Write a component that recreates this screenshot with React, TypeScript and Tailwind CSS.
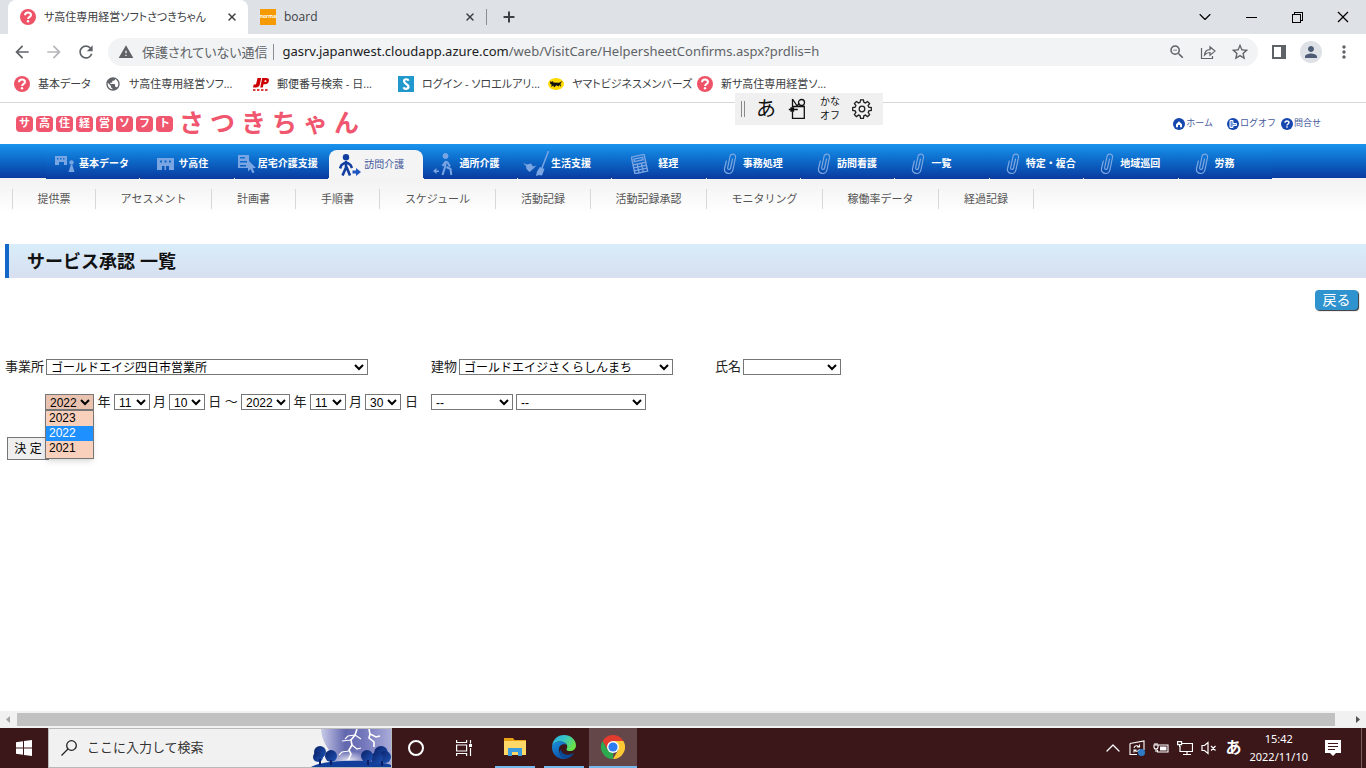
import { ReactNode } from 'react';
import {
  MdArrowBack,
  MdArrowForward,
  MdMoreVert,
  MdOutlineZoomOut,
  MdPerson,
  MdPublic,
  MdRefresh,
  MdStarBorder,
  MdWarning,
} from 'react-icons/md';
import { VscChromeClose, VscChromeMinimize, VscChromeRestore } from 'react-icons/vsc';
import { ChevronDown, ChevronUp, Plus, X } from 'lucide-react';

const QuestionIcon = () => (
  <svg viewBox="0 0 16 16" className="size-4 shrink-0">
    <circle cx="8" cy="8" r="8" fill="#ee5368" />
    <path
      d="M5 6.3C5 4.4 6.3 3.5 8 3.5s3 .9 3 2.5c0 1.9-2.9 1.9-2.9 4"
      fill="none"
      stroke="#fff"
      strokeWidth="2"
    />
    <circle cx="8" cy="12.3" r="1.2" fill="#fff" />
  </svg>
);

const JpIcon = () => (
  <svg viewBox="0 0 16 16" className="size-4 shrink-0">
    <path
      d="M4.500 2h3.700L6.800 8.500C6.300 10.600 5 11.500 3 11.500H0l.7-3h1.500c.6 0 .9-.2 1-.8z"
      fill="#c00"
    />
    <path
      d="M9.200 2h4c2.200 0 3.100 1.200 2.700 3-.5 2.200-1.900 3.200-4 3.200h-1.400l-.7 3.300H7.200zm2.600 2.200-.4 1.800h.9c1.200 0 1.600-1.800.4-1.800z"
      fill="#c00"
      fillRule="evenodd"
    />
    <path d="M0 14h15" stroke="#c00" strokeWidth="1.300" strokeDasharray="2.500 1.500" />
  </svg>
);

const SIcon = () => (
  <svg viewBox="0 0 16 16" className="size-4 shrink-0">
    <rect width="16" height="16" fill="#2299cc" />
    <path
      d="M10.500 4.800C10 2.800 6 2.500 6 5.300c0 2.500 4.500 2.800 4.500 5.300 0 3-4.300 2.800-5 .8"
      fill="none"
      stroke="#fff"
      strokeWidth="2.200"
    />
  </svg>
);

const CatIcon = () => (
  <svg viewBox="0 0 16 16" className="size-4 shrink-0">
    <ellipse cx="8" cy="8" rx="8" ry="6" fill="#ffd900" />
    <path
      d="M2 5 3.500 6l1.500-1 .3 1.500 5.700.2 3.500-1.700-2 2.500.5 3.500-1.500-2-1 1.500-2-1.300L6 11.500l-.5-2L3 11l.8-2.300L2.300 8z"
      fill="#111"
    />
  </svg>
);

interface BookmarkProps {
  icon: ReactNode;
  label: string;
  width: string;
}

const bookmarks: BookmarkProps[] = [
  { icon: <QuestionIcon />, label: '基本データ', width: 'w-[91px]' },
  {
    icon: <MdPublic className="size-4 shrink-0 text-[#5f6368]" />,
    label: 'サ高住専用経営ソフ...',
    width: 'w-[148px]',
  },
  { icon: <JpIcon />, label: '郵便番号検索 - 日...', width: 'w-[145px]' },
  { icon: <SIcon />, label: 'ログイン - ソロエルアリ...', width: 'w-[150px]' },
  { icon: <CatIcon />, label: 'ヤマトビジネスメンバーズ', width: 'w-[149px]' },
  { icon: <QuestionIcon />, label: '新サ高住専用経営ソ...', width: 'w-[149px]' },
];

const TabStrip = () => (
  <div className="flex h-[34px] items-center bg-[#dee1e6] pl-2 text-[#3c4043]">
    <div className="flex h-full w-[240px] items-center rounded-t-lg bg-white pl-3">
      <QuestionIcon />
      <span className="ml-2 flex-1 whitespace-nowrap text-[11px]">
        サ高住専用経営ソフトさつきちゃん
      </span>
      <button aria-label="閉じる" className="mr-2">
        <X className="size-4 p-0.5" strokeWidth={3} />
      </button>
    </div>
    <div className="flex w-[239px] items-center border-r border-[#8a8d91] pl-3">
      <span className="flex size-4 items-center justify-center bg-[#f59a00] text-[5px] font-bold text-white">
        norma
      </span>
      <span className="ml-2 flex-1 text-xs">board</span>
      <button aria-label="閉じる" className="mr-2">
        <X className="size-4 p-0.5" strokeWidth={3} />
      </button>
    </div>
    <button aria-label="新しいタブ" className="ml-3">
      <Plus className="size-5 p-0.5" strokeWidth={3} />
    </button>
    <div className="ml-auto flex h-7 text-black">
      <button aria-label="タブを検索" className="flex w-[46px] items-center justify-center">
        <ChevronDown className="size-5" strokeWidth={1.3} />
      </button>
      <button aria-label="最小化" className="flex w-[46px] items-center justify-center">
        <VscChromeMinimize className="size-4" />
      </button>
      <button aria-label="元に戻す" className="flex w-[46px] items-center justify-center">
        <VscChromeRestore className="size-4" />
      </button>
      <button aria-label="ウィンドウを閉じる" className="flex w-[46px] items-center justify-center">
        <VscChromeClose className="size-4" />
      </button>
    </div>
  </div>
);

const AddressBar = () => (
  <div className="flex h-9 items-center pl-3 pr-3 text-[#5f6368]">
    <button aria-label="戻る" className="mr-3">
      <MdArrowBack className="size-5" />
    </button>
    <button aria-label="進む" className="mr-3 text-[#b4b6b9]">
      <MdArrowForward className="size-5" />
    </button>
    <button aria-label="再読み込み" className="mr-3">
      <MdRefresh className="size-5" />
    </button>
    <div className="flex h-7 flex-1 items-center rounded-full bg-[#f1f3f4] pl-2.5 pr-2">
      <MdWarning className="size-4" />
      <span className="ml-2 border-r border-[#8a8d91] pr-1.5 text-[13px] leading-4">
        保護されていない通信
      </span>
      <span className="ml-2 flex-1 font-['Noto_Sans'] text-[13px]">
        <span className="text-[#202124]">gasrv.japanwest.cloudapp.azure.com</span>
        /web/VisitCare/HelpersheetConfirms.aspx?prdlis=h
      </span>
      <button aria-label="ズーム" className="mr-3.5">
        <MdOutlineZoomOut className="size-[18px]" />
      </button>
      <button aria-label="共有" className="mr-3.5">
        <svg viewBox="0 0 16 16" className="size-4" fill="none" stroke="#5f6368" strokeWidth="1.2">
          <path d="M1.500 4v10.500h11V12" />
          <path d="M4.500 11c.3-3.500 2-5.300 5.500-5.400V2.800l5 4.300-5 4.200V8.500c-2.500 0-4 .7-5.500 2.500z" />
        </svg>
      </button>
      <button aria-label="ブックマーク">
        <MdStarBorder className="size-5" />
      </button>
    </div>
    <button aria-label="サイドパネル" className="ml-3.5">
      <svg viewBox="0 0 14 14" className="size-3.5">
        <path d="M0 0h14v14H0zM2 2v10h7V2z" fill="#5f6368" fillRule="evenodd" />
      </svg>
    </button>
    <button
      aria-label="プロフィール"
      className="ml-3.5 flex size-[22px] items-center justify-center rounded-full bg-[#dee1e6] text-[#4d5b75]"
    >
      <MdPerson className="size-[18px]" />
    </button>
    <button aria-label="メニュー" className="ml-3">
      <MdMoreVert className="size-5" />
    </button>
  </div>
);

const Bookmarks = () => (
  <div className="flex h-[33px] items-center border-b border-[#d5d7da] pb-1 pl-3.5 text-[#3c4043]">
    {bookmarks.map(({ icon, label, width }) => (
      <a
        key={label}
        href="#"
        className={`flex shrink-0 items-center gap-2 whitespace-nowrap text-[11px] ${width}`}
      >
        {icon}
        {label}
      </a>
    ))}
  </div>
);

const ImeBar = () => (
  <div className="absolute left-[735px] top-[93px] flex h-8 w-[148px] items-center bg-[#f0f0f0] text-[#111]">
    <span className="ml-1.5 h-4 w-1 border-x border-[#8a8a8a]" />
    <span className="ml-[11px] w-5 text-xl leading-none">あ</span>
    <svg viewBox="0 0 18 22" className="ml-3 h-[22px] w-[18px]" fill="none" stroke="#111" strokeWidth="1.300">
      <path d="M4.500 13.500v6.800h11.800V8.500H4.500v1" />
      <path d="M.8 11.500h9M3 10h2.500v3H3z" />
      <path d="M4.500 1v7M4.500 1l5 7.500M8 8.500l3.500-3" />
      <circle cx="13.500" cy="4.500" r="3" />
    </svg>
    <span className="ml-3.5 w-5 text-center text-[10px] leading-[14px]">
      かな
      <br />
      オフ
    </span>
    <svg viewBox="0 0 20 20" className="ml-3 size-5" fill="none" stroke="#222" strokeWidth="1.300">
      <path d="M8.600.8h2.800l.5 2.500 1.500.6 2.200-1.400 2 2-1.500 2.100.7 1.600 2.500.4v2.800l-2.500.5-.6 1.500 1.400 2.200-2 2-2.200-1.500-1.500.7-.5 2.500H8.600l-.5-2.500-1.500-.7-2.200 1.500-2-2 1.500-2.200-.7-1.500-2.500-.5V8.600l2.500-.4.7-1.600-1.500-2.100 2-2 2.200 1.400 1.500-.6z" />
      <circle cx="10" cy="10" r="2.800" />
    </svg>
  </div>
);

const logoTiles = ['サ', '高', '住', '経', '営', 'ソ', 'フ', 'ト'];
const logoName = ['さ', 'つ', 'き', 'ち', 'ゃ', 'ん'];

const headerLinks = [
  {
    label: 'ホーム',
    margin: 'mr-3.5',
    icon: <path d="M3 6.300 6 3.300l3 3v2.900H7V7H5v2.200H3z" fill="#fff" />,
  },
  {
    label: 'ログオフ',
    margin: 'mr-[5px]',
    icon: <path d="M3 2.500v7h3v-2h3.500v-2H6v-3z" fill="#6f93da" stroke="#fff" strokeWidth="1" />,
  },
  {
    label: '問合せ',
    margin: 'mr-[45px]',
    icon: (
      <path
        d="M4 4.800C4 2.400 8 2.400 8 4.600 8 6 6 6 6 7.500M6 8.300v1.500"
        fill="none"
        stroke="#fff"
        strokeWidth="1.400"
      />
    ),
  },
];

const SiteHeader = () => (
  <header className="flex h-[41px] items-center justify-between pl-4">
    <h1 className="flex items-center font-bold text-[#f0566e]">
      <span className="flex gap-[3px]">
        {logoTiles.map((char) => (
          <span
            key={char}
            className="flex h-4 w-[17px] items-center justify-center rounded-sm bg-[#f0566e] text-[11px] text-white"
          >
            {char}
          </span>
        ))}
      </span>
      <span className="ml-1.5 flex gap-1.5 text-[25px] leading-none">
        {logoName.map((char) => (
          <span key={char}>{char}</span>
        ))}
      </span>
    </h1>
    <nav className="flex text-[9px] text-[#46599b]">
      {headerLinks.map(({ label, margin, icon }) => (
        <a key={label} href="#" className={`flex items-center gap-px ${margin}`}>
          <svg viewBox="0 0 12 12" className="size-3">
            <circle cx="6" cy="6" r="6" fill="#1547ae" />
            {icon}
          </svg>
          {label}
        </a>
      ))}
    </nav>
  </header>
);

const ClipIcon = () => (
  <svg
    viewBox="0 0 14 24"
    className="h-6 w-3.5"
    fill="none"
    stroke="#7ea8e2"
    strokeWidth="1.200"
    strokeLinecap="round"
  >
    <path d="M9.500 7 7.500 16c-.6 2.300-3.200 1.800-2.800-.5L7 4.500C7.800.8 13.200 1.500 12.500 5.500L10 17.500c-1.200 6-9.500 4.800-8.500-1L3.300 9" />
  </svg>
);

const navItems = [
  {
    label: '基本データ',
    pad: 'pl-[9px]',
    iconWidth: 'w-6',
    icon: (
      <svg viewBox="0 0 20 18" className="h-[18px] w-5" fill="#7aa5e3">
        <path
          d="M0 1h12v9H9V7H4v3H0zM2 3v1.500h1.500V3zM5 3v1.500h1.500V3zM8 3v1.500h1.500V3z"
          fillRule="evenodd"
        />
        <circle cx="16.500" cy="7.500" r="2.200" />
        <path d="M15.800 10h1.500l2.200 7h-6z" />
      </svg>
    ),
  },
  {
    label: 'サ高住',
    pad: 'pl-[17px]',
    iconWidth: 'w-[21px]',
    icon: (
      <svg viewBox="0 0 17 12" className="h-3 w-[17px]" fill="#7aa5e3">
        <path
          d="M0 0h17v12h-5V8H9v4H7.500V8H5v4H0zM3 2.500v2h2v-2zM7.500 2.500v2h2v-2zM12 2.500v2h2v-2z"
          fillRule="evenodd"
        />
      </svg>
    ),
  },
  {
    label: '居宅介護支援',
    pad: 'pl-[3px]',
    iconWidth: 'w-5',
    icon: (
      <svg viewBox="0 0 19 20" className="h-5 w-[19px]" fill="#7aa5e3">
        <path
          d="M0 1h11v13H0zM2 3v1.500h5V3zM2 7v1.500h7V7zM2 11v1.500h6V11z"
          fillRule="evenodd"
        />
        <path d="m10 6 8 8-3.500.2 2 4-2 1-2-4.200-2.500 2.500z" />
      </svg>
    ),
  },
  {
    label: '訪問介護',
    active: true,
    pad: 'pl-2.5',
    iconWidth: 'w-[25px]',
    icon: (
      <svg viewBox="0 0 22 22" className="h-[22px] w-[22px]">
        <circle cx="7" cy="3.200" r="3.200" fill="#123f9f" />
        <path
          d="M7 7v6.500L3.500 21.500M7.500 13l3.500 8.500M7 8 2.500 11 1 14.500M7.500 8l4 3 1.500 3"
          fill="none"
          stroke="#123f9f"
          strokeWidth="2.600"
        />
        <path d="M13.500 16.500H17V14l5 4-5 4v-2.500h-3.500z" fill="#1f55c0" />
      </svg>
    ),
  },
  {
    label: '通所介護',
    pad: 'pl-2',
    iconWidth: 'w-7',
    icon: (
      <svg viewBox="0 0 22 22" className="h-[22px] w-[22px]" fill="#7aa5e3" stroke="#7aa5e3">
        <circle cx="13.500" cy="3" r="2.500" />
        <path
          d="M14 8l-3.500 5M14 8l-1 6-2.500 8M14.500 14l4 2 .8 6M15 8.500l3 5"
          fill="none"
          strokeWidth="2"
        />
        <path d="M7 17.500H4.500V15L1 18l3.500 3v-2H7z" stroke="none" />
      </svg>
    ),
  },
  {
    label: '生活支援',
    pad: 'pl-1',
    iconWidth: 'w-[29px]',
    icon: (
      <svg viewBox="0 0 28 26" className="h-[26px] w-7" fill="#7aa5e3">
        <path d="M26.500 0 20 17" fill="none" stroke="#7aa5e3" strokeWidth="1.500" />
        <path d="m18 16 4.500 2-2.500 6.500-3-.5-3 1 1-4.500zM1 12l4 1.500 4-1 2 3 3.500-1-3 3-4 3.500-3-3-.5-3z" />
      </svg>
    ),
  },
  {
    label: '経理',
    pad: 'pl-[19px]',
    iconWidth: 'w-[27px]',
    icon: (
      <svg viewBox="0 0 18 20" className="h-5 w-[18px]" fill="none" stroke="#7aa5e3" strokeWidth="1.400">
        <g transform="rotate(-12 9 10)">
          <path d="M2 1.500h13v17H2zM4 4h9v2.500H4zM2 9.500h13M2 12.500h13M2 15.500h13M6.300 9v9M10.600 9v9" />
        </g>
      </svg>
    ),
  },
  { label: '事務処理', pad: 'pl-4', iconWidth: 'w-5', icon: <ClipIcon /> },
  { label: '訪問看護', pad: 'pl-4', iconWidth: 'w-5', icon: <ClipIcon /> },
  { label: '一覧', pad: 'pl-4', iconWidth: 'w-5', icon: <ClipIcon /> },
  { label: '特定・複合', pad: 'pl-4', iconWidth: 'w-5', icon: <ClipIcon /> },
  { label: '地域巡回', pad: 'pl-4', iconWidth: 'w-5', icon: <ClipIcon /> },
  { label: '労務', pad: 'pl-4', iconWidth: 'w-5', icon: <ClipIcon /> },
];

const subItems = [
  { label: '提供票', width: 'w-[84px]' },
  { label: 'アセスメント', width: 'w-[116px]' },
  { label: '計画書', width: 'w-[84px]' },
  { label: '手順書', width: 'w-[84px]' },
  { label: 'スケジュール', width: 'w-[116px]' },
  { label: '活動記録', width: 'w-[95px]' },
  { label: '活動記録承認', width: 'w-[116px]' },
  { label: 'モニタリング', width: 'w-[116px]' },
  { label: '稼働率データ', width: 'w-[116px]' },
  { label: '経過記録', width: 'w-[95px]' },
];

const MainNav = () => (
  <nav className="relative h-[34px] bg-linear-to-b from-[#1a94ee] to-[#0b3aa0] pl-[46px]">
    <div className="grid h-[35px] w-[1226px] grid-cols-[repeat(13,minmax(0,1fr))] gap-px">
      {navItems.map(({ label, pad, iconWidth, icon, active }) => (
        <a
          key={label}
          href="#"
          className={`flex items-center whitespace-nowrap text-[10px] ${pad} ${
            active
              ? 'mt-1.5 rounded-t-lg bg-[#f4f4f4] text-[#46599b]'
              : 'bg-linear-to-b from-[#1a94ee] to-[#0b3aa0] pt-1 font-bold text-white'
          }`}
        >
          <span className={`shrink-0 ${iconWidth}`}>{icon}</span>
          {label}
        </a>
      ))}
    </div>
  </nav>
);

const SubNav = () => (
  <nav className="flex h-[35px] bg-linear-to-b from-[#f2f2f2] to-white pl-3 pt-[11px] text-[11px] text-[#555]">
    {subItems.map(({ label, width }) => (
      <a
        key={label}
        href="#"
        className={`flex h-5 shrink-0 items-center justify-center whitespace-nowrap border-r border-[#d8d8d8] first:border-l ${width}`}
      >
        {label}
      </a>
    ))}
  </nav>
);

interface SelectProps {
  id: string;
  value?: string;
  label?: string;
  className: string;
}

const Select = ({ id, value = '', label, className }: SelectProps) => (
  <select
    id={id}
    aria-label={label}
    className={`h-4 border border-[#767676] text-xs leading-none text-black ${className}`}
  >
    <option>{value}</option>
  </select>
);

const years = ['2023', '2022', '2021'];

const SearchForm = () => (
  <form className="mt-[49px] pl-[5px] text-[13px] text-[#222]">
    <div className="flex h-4 items-center">
      <label htmlFor="office">事業所</label>
      <Select
        id="office"
        value="ゴールドエイジ四日市営業所"
        className="ml-0.5 mr-[63px] w-[322px] bg-white"
      />
      <label htmlFor="building">建物</label>
      <Select
        id="building"
        value="ゴールドエイジさくらしんまち"
        className="ml-0.5 mr-[42px] w-[214px] bg-white"
      />
      <label htmlFor="name">氏名</label>
      <Select id="name" className="ml-0.5 w-[98px] bg-white" />
    </div>
    <div className="mt-[19px] flex h-4 items-center pl-10">
      <div className="relative">
        <Select id="from-year" value="2022" className="block w-[49px] bg-[#eac3b0]" />
        <ul
          role="listbox"
          aria-label="年"
          className="absolute left-0 top-4 z-10 w-[49px] border border-[#767676] bg-[#f8d0bc] pb-0.5 text-xs text-black shadow-md"
        >
          {years.map((year) => (
            <li
              key={year}
              role="option"
              aria-selected={year === '2022'}
              className={`h-[15px] pl-[3px] leading-[15px] ${
                year === '2022' ? 'bg-[#1e90ff] text-white' : ''
              }`}
            >
              {year}
            </li>
          ))}
        </ul>
      </div>
      <label htmlFor="from-year" className="w-5 text-center">
        年
      </label>
      <Select id="from-month" value="11" className="w-9 bg-white" />
      <label htmlFor="from-month" className="w-[19px] text-center">
        月
      </label>
      <Select id="from-day" value="10" className="w-9 bg-white" />
      <label htmlFor="from-day" className="w-9 whitespace-nowrap text-center">
        日 ～
      </label>
      <Select id="to-year" value="2022" className="w-[49px] bg-white" />
      <label htmlFor="to-year" className="w-5 text-center">
        年
      </label>
      <Select id="to-month" value="11" className="w-9 bg-white" />
      <label htmlFor="to-month" className="w-[19px] text-center">
        月
      </label>
      <Select id="to-day" value="30" className="w-9 bg-white" />
      <label htmlFor="to-day" className="w-[30px] pl-1">
        日
      </label>
      <Select id="kind" label="種別" value="--" className="w-[82px] bg-white" />
      <Select id="status" label="状態" value="--" className="ml-[3px] w-[130px] bg-white" />
    </div>
    <button
      type="button"
      className="ml-0.5 mt-[27px] block h-[23px] w-[42px] whitespace-nowrap border border-[#767676] bg-[#efefef] text-xs text-black"
    >
      決 定
    </button>
  </form>
);

const ScrollBar = () => (
  <div className="flex h-[17px] items-center bg-[#f1f1f1]">
    <svg viewBox="0 0 17 17" className="size-[17px]">
      <path d="M10 5v7L6 8.500z" fill="#a3a3a3" />
    </svg>
    <div className="h-[13px] flex-1 bg-[#c1c1c1]" />
    <svg viewBox="0 0 17 17" className="ml-3.5 size-[17px]">
      <path d="M7 5v7l4-3.500z" fill="#505050" />
    </svg>
  </div>
);

const StormPicture = () => (
  <svg viewBox="0 0 80 38" className="h-[38px] w-20">
    <defs>
      <linearGradient id="sky" x1="0" y1="0" x2="1" y2="0">
        <stop offset="0" stopColor="#c9cbe8" />
        <stop offset="0.350" stopColor="#6267ae" />
        <stop offset="0.600" stopColor="#7276bb" />
        <stop offset="1" stopColor="#a9abd8" />
      </linearGradient>
      <radialGradient id="glow">
        <stop offset="0" stopColor="#fff" stopOpacity="0.900" />
        <stop offset="1" stopColor="#fff" stopOpacity="0" />
      </radialGradient>
      <linearGradient id="tree" x1="0" y1="0" x2="1" y2="1">
        <stop offset="0" stopColor="#0a1f66" />
        <stop offset="1" stopColor="#1e55b8" />
      </linearGradient>
    </defs>
    <path d="M10 0h70v38H26C24 24 11 18 10 0z" fill="url(#sky)" />
    <ellipse cx="38" cy="32" rx="18" ry="10" fill="url(#glow)" />
    <g fill="none" stroke="#fff" strokeWidth="1.600">
      <path d="m46 0-2 6-4 5 1 5-3 5 2 4-3 7" />
      <path d="m44 6-7 1-3 3M40 11l-9 1M41 16l5 4 4-1M38 22l-7 1-3 3M44 6l6 4" strokeWidth="1.200" />
      <path d="m58 0 1 5-1 4 5 4v5M59 5l6 3 4-1" />
    </g>
    <path d="M0 38c12-8 64-8 80-2v2z" fill="#123f9c" />
    <g fill="url(#tree)">
      <circle cx="9" cy="23" r="6" />
      <circle cx="7" cy="28" r="5" />
      <circle cx="20" cy="27" r="6" />
      <circle cx="70" cy="24" r="7" />
      <circle cx="74" cy="28" r="6" />
      <circle cx="66" cy="29" r="6" />
      <circle cx="56" cy="27" r="6" />
    </g>
    <path d="M8 30h2v6H8zM19 31h2v5h-2zM70 32h2v5h-2zM56 31h2v5h-2z" fill="#0a1f66" />
  </svg>
);

const FolderIcon = () => (
  <svg viewBox="0 0 22 20" className="h-5 w-[22px]">
    <path d="M0 1h9l1.500 2H22v15H0z" fill="#e8a317" />
    <path d="M0 4h22v14H0z" fill="#ffd867" />
    <path d="M4 11h14v8h-4v-4H8v4H4z" fill="#3d9be0" />
  </svg>
);

const EdgeIcon = () => (
  <svg viewBox="0 0 24 24" className="size-6">
    <defs>
      <linearGradient id="edge-top" x1="0" y1="0" x2="1" y2="0.500">
        <stop offset="0" stopColor="#2aa8e0" />
        <stop offset="0.500" stopColor="#36c6c8" />
        <stop offset="1" stopColor="#68e046" />
      </linearGradient>
      <linearGradient id="edge-low" x1="0" y1="0" x2="0.500" y2="1">
        <stop offset="0" stopColor="#1b8fdd" />
        <stop offset="1" stopColor="#0d55a8" />
      </linearGradient>
    </defs>
    <path
      d="M0 11C.8 4.500 5.500 0 12 0c7 0 12 5 12 10.500 0 3.500-2.800 5.500-6 5.500-2.500 0-4-1-3.500-1.800 2.500-3.700-1-7.700-6-7.700C4.500 6.500 1.200 8.500 0 11z"
      fill="url(#edge-top)"
    />
    <path
      d="M0 12C0 8.500 4 6.500 8.500 6.500c3 0 5.500 1.500 6.300 3.300C9.500 8 6.500 11.500 7 15.500 7.500 20 11 23 14.500 23.700 6.500 25.500 0 20 0 12z"
      fill="url(#edge-low)"
    />
    <path d="M9.300 14c-.8 5 5.700 7.800 12.700 4-1.800 3.200-4.500 5.200-7.500 5.700C9 23 5.500 17.500 9.300 14z" fill="#0a4a96" />
  </svg>
);

const ChromeIcon = () => (
  <svg viewBox="0 0 24 24" className="size-6">
    <path d="M12 6h10.400A12 12 0 0 0 1.600 6l5.200 9z" fill="#e33b2e" />
    <path d="M1.600 6 6.800 15 12 18v6A12 12 0 0 1 1.600 6z" fill="#2da94f" />
    <path d="M22.400 6H12l5.200 9L12 24A12 12 0 0 0 22.400 6z" fill="#fcc934" />
    <circle cx="12" cy="12" r="6" fill="#fff" />
    <circle cx="12" cy="12" r="4.600" fill="#2f7cf0" />
  </svg>
);

const TaskBar = () => (
  <footer className="flex h-10 items-center bg-[#3b171a] text-white">
    <button aria-label="スタート" className="flex h-full w-12 items-center justify-center">
      <svg viewBox="0 0 16 16" className="size-4" fill="#fff">
        <path d="M0 2.200 7 1.200v6.300H0zM8 1l8-1v7.500H8zM0 8.500h7v6.300l-7-1zM8 8.500h8V16l-8-1z" />
      </svg>
    </button>
    <div className="flex h-full w-[344px] items-center border border-[#b9b9b9] bg-[#f1f1f1] pl-3 text-[#333]">
      <svg viewBox="0 0 16 16" className="size-4 shrink-0" fill="none" stroke="#222" strokeWidth="1.300">
        <circle cx="10.500" cy="5.500" r="4.800" />
        <path d="M7 9 .5 15.500" />
      </svg>
      <input
        aria-label="検索"
        placeholder="ここに入力して検索"
        className="ml-2.5 min-w-0 flex-1 text-[13px] placeholder:text-[#333]"
      />
      <StormPicture />
    </div>
    <button aria-label="Cortana" className="flex h-full w-12 items-center justify-center">
      <span className="size-4 rounded-full border-2 border-white" />
    </button>
    <button aria-label="タスク ビュー" className="flex h-full w-12 items-center justify-center">
      <svg viewBox="0 0 16 16" className="size-4" fill="none" stroke="#fff" strokeWidth="1.200">
        <path d="M.6 0v2.500h10V0M.6 16v-2.500h10V16M.6 5h10v6H.6zM14.500 0v3.500M14.500 8v8" />
        <path d="M13 4h3v3h-3z" fill="#fff" stroke="none" />
      </svg>
    </button>
    <button
      aria-label="エクスプローラー"
      className="ml-[7px] flex h-full w-10 items-center justify-center border-b-2 border-[#76b9ed]"
    >
      <FolderIcon />
    </button>
    <button
      aria-label="Edge"
      className="ml-[9px] flex h-full w-10 items-center justify-center border-b-2 border-[#76b9ed]"
    >
      <EdgeIcon />
    </button>
    <button
      aria-label="Chrome"
      className="ml-[5px] flex h-full w-12 items-center justify-center border-b-2 border-[#76b9ed] bg-[#644749]"
    >
      <ChromeIcon />
    </button>
    <div className="ml-auto flex items-center gap-2">
      <ChevronUp className="-mr-1 size-6" strokeWidth={1.3} />
      <svg viewBox="0 0 16 16" className="size-4" fill="none" stroke="#fff" strokeWidth="1.100">
        <path d="M1 3.500 15 1v9M1 3.500v11h7" />
        <path d="M5 8c.5-2.500 4-3 5-1M10.500 4.500V7H8M10.500 9c-.5 2.500-4 3-5 1M5 12.500V10h2.500" />
        <circle cx="12.500" cy="12.500" r="3.500" fill="#2f7bc8" stroke="none" />
      </svg>
      <svg viewBox="0 0 16 16" className="size-4" fill="none" stroke="#fff" strokeWidth="1.100">
        <path d="M5.500 5H15v7H4.500v-2M1 5h4v2c0 1-.7 2-2 2s-2-1-2-2zM2 3v2M4 3v2M3 9v3" />
        <path d="M7 6.500h6.500v4H7z" fill="#fff" stroke="none" />
      </svg>
      <svg viewBox="0 0 16 16" className="size-4" fill="none" stroke="#fff" strokeWidth="1.200">
        <path d="M5 3.500h10.500v8H3V6M10 11.500v3M6 14.500h8M.6 1.600h4v3h-4zM2.600 5v2" />
      </svg>
      <svg viewBox="0 0 16 16" className="size-4" fill="none" stroke="#fff" strokeWidth="1.200">
        <path d="M1 5.500h2.500L7 2.500v11l-3.500-3H1zM10 6l4.500 4.500M14.500 6 10 10.500" />
      </svg>
      <span className="w-4 text-base font-bold leading-none">あ</span>
    </div>
    <time className="ml-2 text-center font-['Noto_Sans'] text-[11px] leading-[18px]">
      15:42
      <br />
      2022/11/10
    </time>
    <svg viewBox="0 0 16 16" className="ml-[17px] size-4">
      <path d="M0 0h16v13h-5l-3 3-3-3H0z" fill="#fff" />
      <path d="M3 3.500h10M3 6.500h10M3 9.500h7" stroke="#3b171a" />
    </svg>
    <div className="ml-5 mr-1 h-full w-px bg-[#7a5f61]" />
  </footer>
);

const App = () => {
  return (
    <div className="relative flex h-screen flex-col overflow-hidden bg-white font-['Liberation_Sans','Noto_Sans_CJK_JP',sans-serif]">
      <div className="font-['Open_Sans','Noto_Sans_CJK_JP',sans-serif] [font-feature-settings:'palt']">
        <TabStrip />
        <AddressBar />
        <Bookmarks />
      </div>
      <ImeBar />
      <SiteHeader />
      <MainNav />
      <SubNav />
      <main className="flex-1">
        <h2 className="ml-[5px] mt-[31px] h-[34px] border-l-4 border-[#1168c8] bg-linear-to-b from-[#d9edfa] to-[#d7dff0] pl-[18px] text-lg leading-9 font-bold text-[#111]">
          サービス承認 一覧
        </h2>
        <div className="mt-3 flex justify-end pr-2">
          <button className="h-5 w-[43px] rounded-sm bg-[#2f93cf] text-sm leading-5 text-white shadow-[1px_1px_1px_#333]">
            戻る
          </button>
        </div>
        <SearchForm />
      </main>
      <ScrollBar />
      <TaskBar />
    </div>
  );
};

export default App;
